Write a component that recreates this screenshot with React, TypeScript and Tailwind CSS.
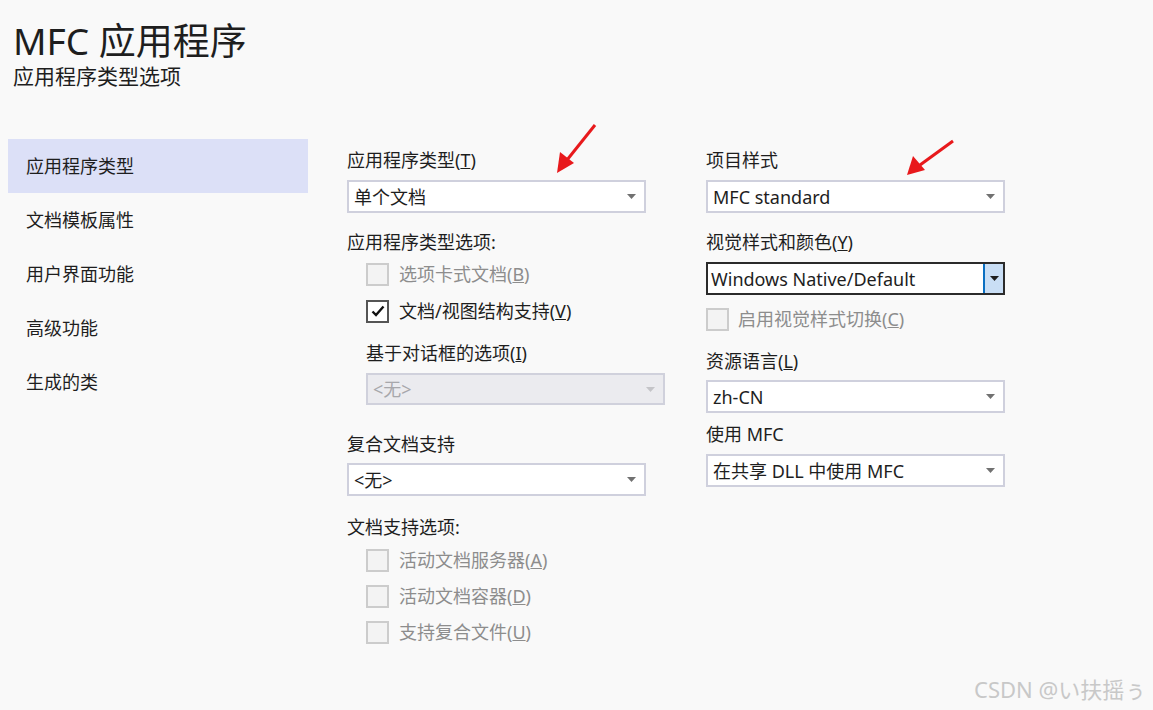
import React from "react";

const FONT = { fontFamily: '"Segoe UI", "Noto Sans", "Noto Sans CJK SC", sans-serif' };

function Arrow({ dark = false, color = "#717171" }: { dark?: boolean; color?: string }) {
  return (
    <svg width="9" height="5" viewBox="0 0 9 5" className="shrink-0">
      <path d="M0 0 L9 0 L4.5 5 Z" fill={dark ? "#1e1e1e" : color} />
    </svg>
  );
}

function Dropdown({ value, width = "w-[299px]", disabled = false, h = "h-[33px]" }: { value: string; width?: string; disabled?: boolean; h?: string }) {
  return (
    <div
      className={`${width} ${h} flex items-center justify-between pl-[5px] pr-[8px] border-2 ${
        disabled ? "bg-[#ebebef] border-[#d0d1dc] text-[#a7a7ab]" : "bg-white border-[#cfd0dd] text-[#1e1e1e]"
      } text-[18px]`}
    >
      <span className="leading-none">{value}</span>
      <Arrow color={disabled ? "#c4c4c8" : "#717171"} />
    </div>
  );
}

function FocusDropdown({ value }: { value: string }) {
  return (
    <div className="w-[299px] h-[33px] flex items-stretch border-2 border-[#2b2b2b] bg-white text-[18px] text-[#1e1e1e]">
      <div className="flex-1 flex items-center pl-[3px] leading-none">{value}</div>
      <div className="w-[20px] flex items-center justify-center border-l-2 border-[#0a6fc2] bg-[#c9def5]">
        <Arrow dark />
      </div>
    </div>
  );
}

function Label({ children, mt, disabled = false, indent = false }: { children: React.ReactNode; mt: string; disabled?: boolean; indent?: boolean }) {
  return (
    <div className={`${mt} h-[24px] leading-[24px] text-[18px] ${disabled ? "text-[#8d8d8d]" : "text-[#1e1e1e]"} ${indent ? "pl-[19px]" : ""}`}>
      {children}
    </div>
  );
}

function Check({ label, mt, checked = false, disabled = false, indent = true }: { label: React.ReactNode; mt: string; checked?: boolean; disabled?: boolean; indent?: boolean }) {
  return (
    <div className={`${mt} h-[24px] flex items-center ${indent ? "pl-[19px] gap-[10px]" : "gap-[9px]"}`}>
      <div
        className={`w-[23px] h-[23px] flex items-center justify-center border-2 ${
          disabled ? "border-[#cccccc] bg-[#f3f3f3]" : "border-[#555555] bg-white"
        }`}
      >
        {checked && (
          <svg width="14" height="12" viewBox="0 0 14 12">
            <path d="M1.5 6.5 L5 10 L12.5 1.5" stroke="#111" strokeWidth="2.4" fill="none" />
          </svg>
        )}
      </div>
      <span className={`text-[18px] leading-[24px] ${disabled ? "text-[#8d8d8d]" : "text-[#1e1e1e]"}`}>{label}</span>
    </div>
  );
}

const navItems = ["应用程序类型", "文档模板属性", "用户界面功能", "高级功能", "生成的类"];

export default function App() {
  return (
    <div className="relative w-full h-[710px] bg-[#f9f9f9] overflow-hidden" style={FONT}>
      <div className="pl-[13px] pt-[21px] flex flex-col items-start">
        <div className="text-[37px] leading-[40px] text-[#1e1e1e]">MFC 应用程序</div>
        <div className="text-[21px] leading-[26px] text-[#1e1e1e] mt-[2px]">应用程序类型选项</div>
      </div>

      <div className="flex mt-[50px]">
        <div className="ml-[8px] w-[300px] flex flex-col">
          {navItems.map((n, i) => (
            <div
              key={n}
              className={`h-[54px] flex items-center pl-[18px] text-[18px] text-[#1e1e1e] ${i === 0 ? "bg-[#dce0f7]" : ""}`}
            >
              {n}
            </div>
          ))}
        </div>

        <div className="ml-[39px] w-[359px] pt-[9px] flex flex-col">
          <Label mt="mt-0">应用程序类型(<u>T</u>)</Label>
          <div className="mt-[8px]"><Dropdown value="单个文档" /></div>
          <Label mt="mt-[17px]">应用程序类型选项:</Label>
          <Check mt="mt-[8px]" disabled label={<>选项卡式文档(<u>B</u>)</>} />
          <Check mt="mt-[13px]" checked label={<>文档/视图结构支持(<u>V</u>)</>} />
          <Label mt="mt-[18px]" indent>基于对话框的选项(<u>I</u>)</Label>
          <div className="mt-[8px] pl-[19px]"><Dropdown value="<无>" disabled h="h-[32px]" /></div>
          <Label mt="mt-[27px]">复合文档支持</Label>
          <div className="mt-[7px]"><Dropdown value="<无>" /></div>
          <Label mt="mt-[19px]">文档支持选项:</Label>
          <Check mt="mt-[9px]" disabled label={<>活动文档服务器(<u>A</u>)</>} />
          <Check mt="mt-[12px]" disabled label={<>活动文档容器(<u>D</u>)</>} />
          <Check mt="mt-[12px]" disabled label={<>支持复合文件(<u>U</u>)</>} />
        </div>

        <div className="w-[300px] pt-[9px] flex flex-col">
          <Label mt="mt-0">项目样式</Label>
          <div className="mt-[8px]"><Dropdown value="MFC standard" /></div>
          <Label mt="mt-[17px]">视觉样式和颜色(<u>Y</u>)</Label>
          <div className="mt-[8px]"><FocusDropdown value="Windows Native/Default" /></div>
          <Check mt="mt-[12px]" disabled indent={false} label={<>启用视觉样式切换(<u>C</u>)</>} />
          <Label mt="mt-[18px]">资源语言(<u>L</u>)</Label>
          <div className="mt-[7px]"><Dropdown value="zh-CN" /></div>
          <Label mt="mt-[9px]">使用 MFC</Label>
          <div className="mt-[8px]"><Dropdown value="在共享 DLL 中使用 MFC" /></div>
        </div>
      </div>

      <svg className="absolute left-0 top-0 pointer-events-none" width="1153" height="710">
        <line x1="595" y1="125" x2="567" y2="160" stroke="#e8191c" strokeWidth="3" />
        <path d="M557 173 L560 152 L574 163 Z" fill="#e8191c" />
        <line x1="953" y1="141" x2="920" y2="165" stroke="#e8191c" strokeWidth="3" />
        <path d="M907 175 L913 156 L925 170 Z" fill="#e8191c" />
      </svg>

      <div className="absolute left-[974px] top-[674px] text-[22px] leading-[30px] text-[#c8c8c8]">
        CSDN @い扶摇ぅ
      </div>
    </div>
  );
}
